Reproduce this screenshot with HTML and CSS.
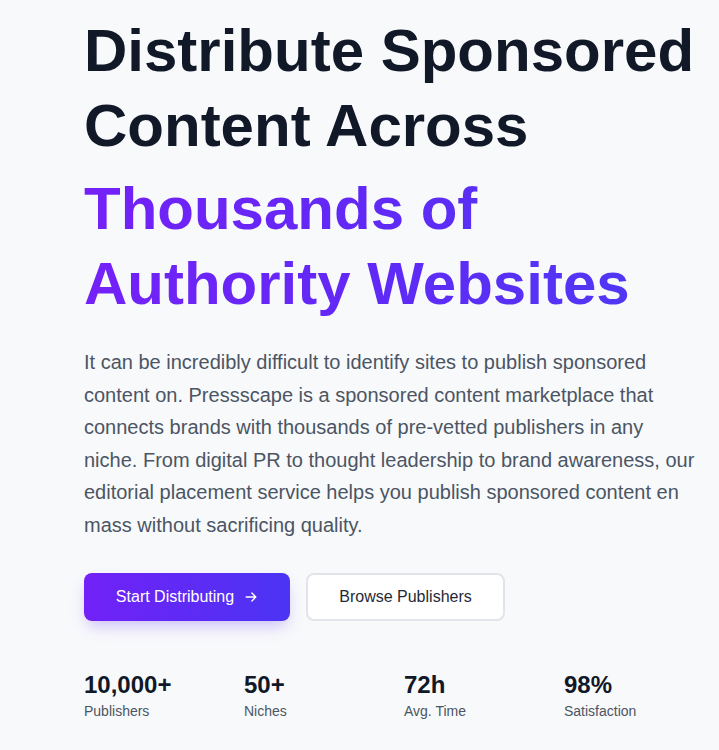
FILE: index.html
```html
<!DOCTYPE html>
<html lang="en">
<head>
<meta charset="utf-8">
<title>Pressscape</title>
<link rel="stylesheet" href="styles.css">
</head>
<body>
<main class="hero">
  <h1 class="title">Distribute Sponsored Content Across <span class="accent">Thousands of Authority Websites</span></h1>
  <p class="lead">It can be incredibly difficult to identify sites to publish sponsored content on. Pressscape is a sponsored content marketplace that connects brands with thousands of pre-vetted publishers in any niche. From digital PR to thought leadership to brand awareness, our editorial placement service helps you publish sponsored content en mass without sacrificing quality.</p>
  <div class="actions">
    <a class="btn btn-primary" href="#">Start Distributing
      <svg class="arrow" viewBox="0 0 16 16" width="14" height="14" fill="none" stroke="currentColor" stroke-width="1.6" stroke-linecap="round" stroke-linejoin="round"><path d="M2.5 8h11M9 3.5L13.5 8 9 12.5"/></svg>
    </a>
    <a class="btn btn-secondary" href="#">Browse Publishers</a>
  </div>
  <div class="stats">
    <div class="stat"><div class="num">10,000+</div><div class="label">Publishers</div></div>
    <div class="stat"><div class="num">50+</div><div class="label">Niches</div></div>
    <div class="stat"><div class="num">72h</div><div class="label">Avg. Time</div></div>
    <div class="stat"><div class="num">98%</div><div class="label">Satisfaction</div></div>
  </div>
</main>
</body>
</html>
```
FILE: styles.css
```css
html, body {
  margin: 0;
  padding: 0;
}
body {
  background: #f8f9fb;
  font-family: "Liberation Sans", Arial, sans-serif;
  color: #111827;
  overflow: hidden;
  width: 719px;
  height: 750px;
}
.hero {
  padding: 13px 0 0 84px;
}
.title {
  margin: 0;
  max-width: 630px;
  font-size: 60px;
  line-height: 75px;
  font-weight: 700;
  color: #111827;
}
.accent {
  display: block;
  margin-top: 8px;
  background: linear-gradient(90deg, #7421f7 0%, #6129f6 45%, #4b3bf4 100%);
  -webkit-background-clip: text;
  background-clip: text;
  color: transparent;
}
.lead {
  margin: 25px 0 0;
  max-width: 611px;
  font-size: 20px;
  line-height: 32.5px;
  color: #4b5563;
}
.actions {
  display: flex;
  gap: 16px;
  margin-top: 32px;
}
.btn {
  display: inline-flex;
  align-items: center;
  justify-content: center;
  box-sizing: border-box;
  height: 48px;
  border-radius: 8px;
  font-size: 16px;
  text-decoration: none;
}
.btn-primary {
  width: 206px;
  gap: 10px;
  color: #ffffff;
  background: linear-gradient(90deg, #7221f7, #4b34f3);
  box-shadow: 0 8px 16px -4px rgba(110, 70, 245, 0.35);
}
.arrow {
  display: block;
}
.btn-secondary {
  width: 199px;
  color: #1f2937;
  background: #ffffff;
  border: 2px solid #e2e4e9;
}
.stats {
  display: grid;
  grid-template-columns: repeat(4, 160px);
  margin-top: 48px;
}
.num {
  font-size: 24px;
  line-height: 32px;
  font-weight: 700;
  color: #111827;
}
.label {
  font-size: 14px;
  line-height: 20px;
  color: #4b5563;
}
```
